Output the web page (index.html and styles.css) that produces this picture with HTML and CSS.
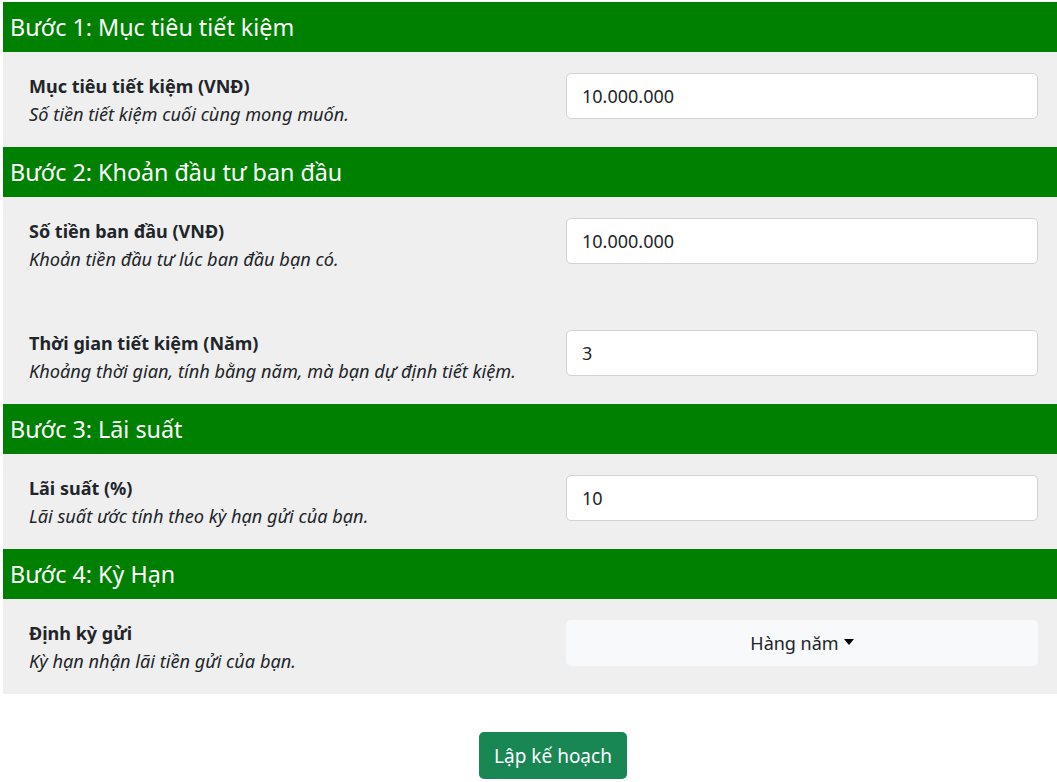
FILE: index.html
```html
<!DOCTYPE html>
<html lang="vi">
<head>
<meta charset="utf-8">
<title>Kế hoạch tiết kiệm</title>
<link rel="stylesheet" href="styles.css">
</head>
<body>
<div class="page">
  <div class="step-title">Bước 1: Mục tiêu tiết kiệm</div>
  <div class="step-body">
    <div class="field">
      <div class="field-text">
        <div class="label">Mục tiêu tiết kiệm (VNĐ)</div>
        <div class="desc">Số tiền tiết kiệm cuối cùng mong muốn.</div>
      </div>
      <input class="input" type="text" value="10.000.000">
    </div>
  </div>

  <div class="step-title">Bước 2: Khoản đầu tư ban đầu</div>
  <div class="step-body">
    <div class="field">
      <div class="field-text">
        <div class="label">Số tiền ban đầu (VNĐ)</div>
        <div class="desc">Khoản tiền đầu tư lúc ban đầu bạn có.</div>
      </div>
      <input class="input" type="text" value="10.000.000">
    </div>
    <div class="field">
      <div class="field-text">
        <div class="label">Thời gian tiết kiệm (Năm)</div>
        <div class="desc">Khoảng thời gian, tính bằng năm, mà bạn dự định tiết kiệm.</div>
      </div>
      <input class="input" type="text" value="3">
    </div>
  </div>

  <div class="step-title">Bước 3: Lãi suất</div>
  <div class="step-body">
    <div class="field">
      <div class="field-text">
        <div class="label">Lãi suất (%)</div>
        <div class="desc">Lãi suất ước tính theo kỳ hạn gửi của bạn.</div>
      </div>
      <input class="input" type="text" value="10">
    </div>
  </div>

  <div class="step-title">Bước 4: Kỳ Hạn</div>
  <div class="step-body">
    <div class="field">
      <div class="field-text">
        <div class="label">Định kỳ gửi</div>
        <div class="desc">Kỳ hạn nhận lãi tiền gửi của bạn.</div>
      </div>
      <button class="select" type="button">Hàng năm<span class="caret"></span></button>
    </div>
  </div>

  <div class="actions">
    <button class="submit" type="button">Lập kế hoạch</button>
  </div>
</div>
</body>
</html>
```

FILE: styles.css
```css
html, body {
  margin: 0;
  padding: 0;
  overflow: hidden;
  background: #fff;
}
body {
  font-family: "Noto Sans", "Open Sans", sans-serif;
  color: #212529;
}
.page {
  width: 1100px;
  margin-left: 3px;
  padding-top: 2px;
}
.step-title {
  height: 50px;
  display: flex;
  align-items: center;
  padding-left: 7px;
  background: #008000;
  color: #fff;
  font-size: 23.3px;
}
.step-body {
  background: #efefef;
  padding-left: 26px;
  display: flex;
  flex-direction: column;
  gap: 17px;
}
.field {
  height: 95px;
  display: flex;
  align-items: flex-start;
  padding-top: 21px;
  box-sizing: border-box;
}
.field-text {
  width: 537px;
  padding-top: 0;
}
.label {
  font-weight: 700;
  font-size: 18px;
  line-height: 27px;
}
.desc {
  font-style: italic;
  font-size: 18.2px;
  line-height: 28px;
}
.input {
  width: 472px;
  height: 46px;
  box-sizing: border-box;
  border: 1px solid #ced4da;
  border-radius: 5px;
  padding: 0 15px;
  font-family: inherit;
  font-size: 18px;
  color: #212529;
  background: #fff;
}
.select {
  width: 472px;
  height: 46px;
  box-sizing: border-box;
  border: none;
  border-radius: 5px;
  background: #f8f9fa;
  font-family: inherit;
  font-size: 18px;
  color: #212529;
  display: flex;
  align-items: center;
  justify-content: center;
}
.caret {
  display: inline-block;
  margin-left: 5px;
  border-left: 5px solid transparent;
  border-right: 5px solid transparent;
  border-top: 6px solid #000;
  margin-top: -2px;
}
.actions {
  display: flex;
  justify-content: center;
  padding-top: 38px;
}
.submit {
  width: 148px;
  height: 47px;
  border: none;
  border-radius: 5px;
  background: #198754;
  color: #fff;
  font-family: inherit;
  font-size: 19px;
}
```
